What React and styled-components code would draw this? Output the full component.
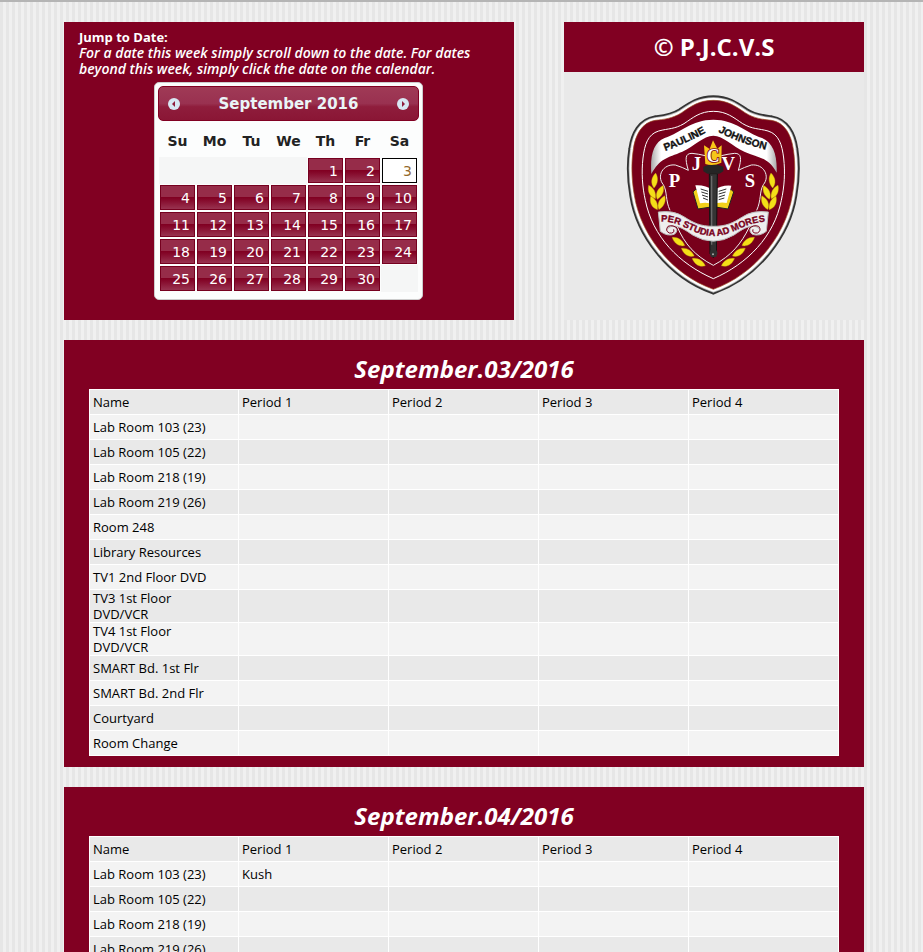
import React from "react";
import styled, { createGlobalStyle } from "styled-components";

const maroon = "#810022";
const bodyFont = '"Trebuchet MS", "Open Sans", "Noto Sans", sans-serif';
const calendarFont = 'Verdana, "DejaVu Sans", sans-serif';

const GlobalStyle = createGlobalStyle`
  * { box-sizing: border-box; }
  html { scrollbar-width: none; }
  body {
    margin: 0;
    font: 13px/16px ${bodyFont};
    color: #000;
    background: repeating-linear-gradient(90deg, #e6e6e6 0 3px, #f0f0f0 3px 6px);
    border-top: 2px solid #b5b5b5;
  }
`;

const Page = styled.main`
  display: flex;
  flex-direction: column;
  gap: 20px;
  padding: 20px 59px 20px 64px;
`;

const TopRow = styled.div`
  display: grid;
  grid-template-columns: 3fr 2fr;
  gap: 50px;
`;

const JumpPanel = styled.section`
  padding: 7px 16px 20px 15px;
  background: ${maroon};
  color: #fff;
`;

const JumpTitle = styled.h2`
  margin: 0;
  font-size: 13px;
  line-height: 16px;
`;

const JumpText = styled.p`
  margin: 0 0 5px;
  font-size: 14px;
  font-weight: 600;
  font-style: italic;
`;

const Calendar = styled.div`
  width: 269px;
  margin: 0 auto;
  padding: 3px 4px;
  border: 1px solid #ccc;
  border-radius: 5px;
  background: #fcfdfd;
  font-family: ${calendarFont};
  font-size: 14px;
  color: #222;
`;

const CalendarHeader = styled.div`
  display: flex;
  align-items: center;
  justify-content: space-between;
  height: 35px;
  margin: 0 -1px;
  padding: 0 7px;
  border: 1px solid #810022;
  border-radius: 5px;
  background: linear-gradient(#a03a56 0, #993150 50%, #8f1d3c 60%, #8a1635 100%);
  color: #eaf5f7;
  font-weight: bold;
  font-size: 15px;
`;

const MonthButton = styled.button`
  display: flex;
  width: 16px;
  height: 16px;
  padding: 0;
  border: 0;
  background: none;
  cursor: pointer;
`;

const DayTable = styled.table`
  width: 100%;
  margin: 3px 0 4px;
  border-collapse: collapse;
  table-layout: fixed;
`;

const DayHeading = styled.th`
  height: 33px;
  padding: 0;
  font-weight: bold;
`;

const DayCell = styled.td`
  height: 27px;
  padding: 1px;
  background: ${(p) => (p.$empty ? "#f5f6f6" : "transparent")};
`;

const DayLink = styled.a`
  display: block;
  height: 25px;
  padding: 0 4px;
  border: 1px solid ${(p) => (p.$today ? "#000" : "#76001f")};
  background: ${(p) =>
    p.$today ? "#fff" : "linear-gradient(#962c49 0 46%, #810022 50%, #85082a 60%, #983350 100%)"};
  color: ${(p) => (p.$today ? "#946a2f" : "#fff")};
  line-height: 24px;
  text-align: right;
  text-decoration: none;
`;

const SchoolPanel = styled.aside`
  display: flex;
  flex-direction: column;
  background: #e9e9e9;
`;

const SchoolTitle = styled.h1`
  margin: 0;
  background: ${maroon};
  color: #fff;
  font-size: 24px;
  line-height: 50px;
  text-align: center;
`;

const Crest = styled.svg`
  display: block;
  width: 210px;
  height: 220px;
  margin: 13px auto 15px;
`;

const DayPanel = styled.section`
  padding: 13px 25px 11px;
  background: ${maroon};
`;

const DayTitle = styled.h2`
  margin: 0 0 4px;
  color: #fff;
  font-size: 24px;
  font-style: italic;
  line-height: 32px;
  text-align: center;
`;

const Schedule = styled.table`
  width: 100%;
  border-collapse: collapse;
  table-layout: fixed;
  border: 1px solid #fff;
`;

const ScheduleRow = styled.tr`
  height: 25px;
  background: #f3f3f3;
  &:nth-child(odd) { background: #e9e9e9; }
`;

const ScheduleCell = styled.td`
  padding: 0 3px;
  border: 1px solid #fff;
  font-weight: normal;
  text-align: left;
  &:first-child { width: 149px; }
`;

const LineBreakCell = styled(ScheduleCell)`
  white-space: pre-line;
`;

const weekdays = ["Su", "Mo", "Tu", "We", "Th", "Fr", "Sa"];
const weeks = [
  [0, 0, 0, 0, 1, 2, 3],
  [4, 5, 6, 7, 8, 9, 10],
  [11, 12, 13, 14, 15, 16, 17],
  [18, 19, 20, 21, 22, 23, 24],
  [25, 26, 27, 28, 29, 30, 0],
];

const rooms = [
  "Lab Room 103 (23)",
  "Lab Room 105 (22)",
  "Lab Room 218 (19)",
  "Lab Room 219 (26)",
  "Room 248",
  "Library Resources",
  "TV1 2nd Floor DVD",
  "TV3 1st Floor\nDVD/VCR",
  "TV4 1st Floor\nDVD/VCR",
  "SMART Bd. 1st Flr",
  "SMART Bd. 2nd Flr",
  "Courtyard",
  "Room Change",
];
const periods = [1, 2, 3, 4];

const days = [
  { title: "September.03/2016", bookings: {} },
  { title: "September.04/2016", bookings: { "Lab Room 103 (23)": { 1: "Kush" } } },
];

function MonthArrow({ next }) {
  return (
    <svg width="16" height="16" viewBox="0 0 16 16" aria-hidden="true">
      <circle cx="8" cy="8" r="6" fill="#d8e7f3" />
      <path d={next ? "M7 5v6l3-3z" : "M9 5v6l-3-3z"} fill="#8f1d3c" />
    </svg>
  );
}

const shield =
  "M310 45C267 45 243 63 215 82C187 100 161 102 136 105C96 111 76 148 70 192C63 236 65 285 73 330C91 444 180 565 310 612C440 565 529 444 547 330C555 285 557 236 550 192C544 148 524 111 484 105C459 102 433 100 405 82C377 63 353 45 310 45Z";
const innerLine =
  "M310 78C270 78 249 97 222 115C193 132 175 129 146 137C113 147 104 178 99 218C94 262 97 305 106 345C128 454 207 535 310 580C413 535 492 454 514 345C523 305 526 262 521 218C516 178 507 147 474 137C445 129 427 132 398 115C371 97 350 78 310 78Z";
const leaf = "M2-23C12-10 12 8 1 22C-11 10-11-8 2-23Z";

const leaves = [
  [133, 286, 5],
  [125, 321, -28],
  [149, 321, 22],
  [131, 354, -28],
  [154, 352, 22],
  [205, 470, -58],
  [233, 502, -60],
  [266, 532, -62],
];

function HalfLaurel() {
  return (
    <g fill="#f4df18" stroke="#c6a70c" strokeWidth="1">
      {leaves.map(([x, y, r]) => (
        <path key={y + x} d={leaf} transform={`translate(${x} ${y}) rotate(${r})`} />
      ))}
    </g>
  );
}

function SchoolCrest() {
  return (
    <Crest viewBox="-3 -1 630 660" role="img" aria-label="Pauline Johnson school crest">
      <defs>
        <path id="left-name" d="M166 197Q235 172 312 128" />
        <path id="right-name" d="M324 139Q390 176 490 198" />
        <path id="motto" d="M153 409C215 407 250 452 310 452C370 452 405 407 480 409" />
        <linearGradient id="ribbon">
          <stop offset="0" stopColor="#aaa" />
          <stop offset=".08" stopColor="#fff" />
          <stop offset=".92" stopColor="#fff" />
          <stop offset="1" stopColor="#aaa" />
        </linearGradient>
      </defs>
      <path d={shield} fill="none" stroke="#343434" strokeWidth="30" />
      <path d={shield} fill="none" stroke="#bdbdbd" strokeWidth="19" />
      <path d={shield} fill="#78001b" stroke="#fff" strokeWidth="14" />
      <path d={shield} fill="#78001b" stroke="#9b4b20" strokeWidth="2" />
      <path d={innerLine} fill="none" stroke="#fff" strokeWidth="3" />
      <path
        d="M124 266C120 210 130 172 164 158C212 143 244 103 310 103C376 103 408 143 456 158C490 172 502 210 500 262C474 215 446 218 403 199C367 183 340 151 310 151C280 151 253 183 217 199C171 218 149 219 124 266Z"
        fill="url(#ribbon)"
      />
      <g
        fontFamily='"Liberation Sans", sans-serif'
        fontWeight="bold"
        fontSize="31"
        fill="#111"
        stroke="#111"
        strokeWidth="1"
      >
        <text><textPath href="#left-name">PAULINE</textPath></text>
        <text><textPath href="#right-name">JOHNSON</textPath></text>
      </g>
      <path
        d="M310 540C254 511 224 475 202 425M180 375C166 345 172 318 160 298C139 273 158 235 196 239Q218 246 235 255C224 218 226 204 246 204Q266 206 286 211M310 540C364 511 394 475 418 425M440 375C454 345 448 318 460 298C481 273 462 235 424 239Q402 246 385 255C396 218 394 204 374 204Q354 206 334 211"
        fill="none"
        stroke="#eee"
        strokeWidth="3"
      />
      <HalfLaurel />
      <g transform="translate(620) scale(-1 1)"><HalfLaurel /></g>
      <g fill="#fff" fontFamily='"Liberation Serif", serif' fontWeight="bold" fontSize="56" textAnchor="middle">
        <text x="193" y="306">P</text>
        <text x="259" y="255">J</text>
        <text x="355" y="255">V</text>
        <text x="420" y="306">S</text>
      </g>
      <path d="M256 313L249 320L264 371L310 364L354 371L371 320L364 313Z" fill="#f2d11b" stroke="#222" strokeWidth="3" />
      <path d="M256 300Q285 298 310 315Q336 298 364 301L350 353Q327 349 310 358Q292 349 270 354Z" fill="#fff" />
      <path d="M272 311l22 7M274 320l20 6M276 329l18 6M279 338l15 6M326 318l23-7M326 326l21-6M326 335l19-6M326 343l17-5" stroke="#333" strokeWidth="3" />
      <path d="M298 265H322L319 505L310 517L300 505Z" fill="#343434" stroke="#111" strokeWidth="3" />
      <path d="M305 272V495" stroke="#696969" strokeWidth="4" />
      <path d="M280 244Q310 231 340 244V258L328 265H292L280 258Z" fill="#252525" />
      <path d="M286 236L282 180L299 191L309 165L322 190L335 180L334 232Q310 243 286 236Z" fill="#f7c719" />
      <text
        x="310"
        y="231"
        fill="#fff"
        stroke="#78001b"
        strokeWidth="5"
        paintOrder="stroke"
        fontFamily='"Liberation Serif", serif'
        fontWeight="bold"
        fontSize="54"
        textAnchor="middle"
      >
        C
      </text>
      <path
        d="M145 380Q192 374 223 395C251 413 271 423 310 423C349 423 369 413 397 395Q428 374 475 380L469 438Q449 454 427 447Q414 437 424 425Q440 417 448 431C426 408 389 438 372 449Q310 486 248 449C231 438 194 408 172 431Q180 417 196 425Q206 437 193 447Q171 454 151 438Z"
        fill="#eeeeee"
        stroke="#bdbdbd"
        strokeWidth="3"
      />
      <path d="M202 430Q190 417 174 423Q164 436 178 443Q195 445 191 432M418 430Q430 417 446 423Q456 436 442 443Q425 445 429 432" fill="none" stroke="#78001b" strokeWidth="3" />
      <text
        fontFamily='"Liberation Sans", sans-serif'
        fontWeight="bold"
        fontSize="28"
        fill="#78001b"
        stroke="#78001b"
        strokeWidth="1"
      >
        <textPath href="#motto">PER STUDIA AD MORES</textPath>
      </text>
      <path d="M303 478H318V493L323 503L318 515H303L299 503L303 493Z" fill="#303030" />
      <circle cx="309" cy="507" r="3" fill="#aaa" />
    </Crest>
  );
}

function DatePicker() {
  return (
    <Calendar>
      <CalendarHeader>
        <MonthButton type="button" aria-label="Previous month"><MonthArrow /></MonthButton>
        <span>September 2016</span>
        <MonthButton type="button" aria-label="Next month"><MonthArrow next /></MonthButton>
      </CalendarHeader>
      <DayTable>
        <thead>
          <tr>{weekdays.map((day) => <DayHeading key={day} scope="col">{day}</DayHeading>)}</tr>
        </thead>
        <tbody>
          {weeks.map((week, row) => (
            <tr key={row}>
              {week.map((day, column) => (
                <DayCell key={column} $empty={!day}>
                  {day > 0 && <DayLink href={`#day-${day}`} $today={day === 3}>{day}</DayLink>}
                </DayCell>
              ))}
            </tr>
          ))}
        </tbody>
      </DayTable>
    </Calendar>
  );
}

function DaySchedule({ title, bookings }) {
  return (
    <DayPanel>
      <DayTitle>{title}</DayTitle>
      <Schedule>
        <tbody>
          <ScheduleRow>
            <ScheduleCell as="th" scope="col">Name</ScheduleCell>
            {periods.map((period) => (
              <ScheduleCell as="th" scope="col" key={period}>Period {period}</ScheduleCell>
            ))}
          </ScheduleRow>
          {rooms.map((room) => (
            <ScheduleRow key={room}>
              <LineBreakCell as="th" scope="row">{room}</LineBreakCell>
              {periods.map((period) => (
                <ScheduleCell key={period}>{bookings[room]?.[period]}</ScheduleCell>
              ))}
            </ScheduleRow>
          ))}
        </tbody>
      </Schedule>
    </DayPanel>
  );
}

export default function App() {
  return (
    <>
      <GlobalStyle />
      <Page>
        <TopRow>
          <JumpPanel>
            <JumpTitle>Jump to Date:</JumpTitle>
            <JumpText>
              For a date this week simply scroll down to the date. For dates beyond this week,
              simply click the date on the calendar.
            </JumpText>
            <DatePicker />
          </JumpPanel>
          <SchoolPanel>
            <SchoolTitle>© P.J.C.V.S</SchoolTitle>
            <SchoolCrest />
          </SchoolPanel>
        </TopRow>
        {days.map((day) => <DaySchedule key={day.title} {...day} />)}
      </Page>
    </>
  );
}
